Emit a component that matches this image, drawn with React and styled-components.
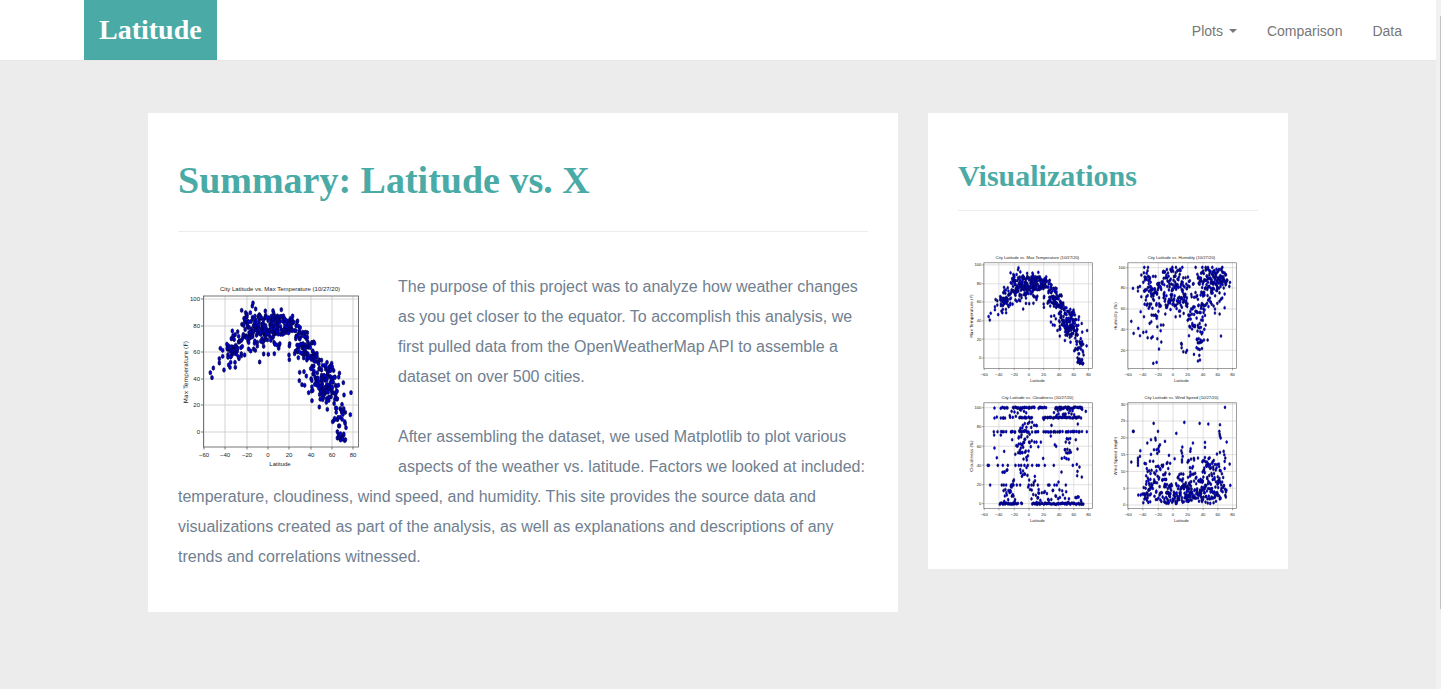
import React from 'react';
import styled, { createGlobalStyle } from 'styled-components';

const TEAL = '#4aaaa5';
const SERIF = '"Liberation Serif", "Times New Roman", serif';

const GlobalStyle = createGlobalStyle`
  *, *::before, *::after { box-sizing: border-box; }
  html { height: 100%; }
  body {
    margin: 0;
    min-height: 100%;
    background: #ececec;
    font-family: "Liberation Sans", Arial, sans-serif;
    font-size: 16px;
    color: #708090;
  }
`;

const Page = styled.div`
  display: flex;
  min-height: 100vh;
`;

const Content = styled.div`
  flex: 1;
  min-width: 0;
`;

const ScrollRail = styled.div`
  width: 5px;
  padding-top: 16px;
  background: #f1f1f1;
  display: flex;
  justify-content: flex-end;
`;

const ScrollThumb = styled.div`
  width: 1px;
  height: 86vh;
  max-height: 100%;
  background: #c1c1c1;
`;

const NavBar = styled.header`
  display: flex;
  justify-content: space-between;
  align-items: stretch;
  min-height: 61px;
  padding: 0 19px 0 84px;
  background: #fff;
  border-bottom: 1px solid #e7e7e7;
`;

const Brand = styled.a`
  display: flex;
  align-items: center;
  padding: 0 15px;
  background: ${TEAL};
  color: #fff;
  font: bold 28px/60px ${SERIF};
  text-decoration: none;
`;

const NavItems = styled.nav`
  display: flex;
  align-items: center;
`;

const NavLink = styled.a`
  padding: 21px 15px 19px;
  color: #777;
  font-size: 14px;
  line-height: 20px;
  text-decoration: none;
`;

const NavButton = styled.button`
  display: flex;
  align-items: center;
  gap: 6px;
  padding: 21px 15px 19px;
  border: 0;
  background: none;
  color: #777;
  font: 14px/20px "Liberation Sans", Arial, sans-serif;
  cursor: pointer;

  &::after {
    content: '';
    border-top: 4px solid #777;
    border-left: 4px solid transparent;
    border-right: 4px solid transparent;
  }
`;

const Columns = styled.main`
  display: grid;
  grid-template-columns: 25fr 12fr;
  align-items: start;
  gap: 30px;
  max-width: 1140px;
  margin: 52px auto 0;
`;

const Card = styled.section`
  padding: 46px 30px 40px;
  background: #fff;
`;

const Title = styled.h1`
  margin: 0;
  padding-bottom: 30px;
  border-bottom: 1px solid #ececec;
  color: ${TEAL};
  font: bold 38px/42px ${SERIF};
`;

const SideTitle = styled.h2`
  margin: 0;
  padding-bottom: 17px;
  border-bottom: 1px solid #ececec;
  color: ${TEAL};
  font: bold 30px/34px ${SERIF};
`;

const Article = styled.div`
  padding-top: 40px;
`;

const Paragraph = styled.p`
  margin: 0;
  line-height: 30px;

  & + & { margin-top: 30px; }
`;

const Figure = styled.div`
  float: left;
  width: 200px;
  margin-right: 20px;
`;

const Gallery = styled.div`
  display: flex;
  flex-wrap: wrap;
  justify-content: center;
  column-gap: 4px;
  padding: 35px 0 3px;
`;

const Thumb = styled.a`
  display: block;
  width: 140px;
`;

const Chart = styled.svg`
  display: block;
  width: 100%;
  height: auto;
`;

const ChartText = styled.text`
  fill: #222;
  font-family: "Liberation Sans", sans-serif;
  font-size: 6px;
  text-anchor: ${(p) => p.$anchor || 'middle'};
`;

const AxisTitle = styled.text`
  fill: #222;
  font-family: "DejaVu Sans", sans-serif;
  font-size: 6px;
  text-anchor: middle;
`;

/* Each plot holds single points [x, y] and clusters [x0, x1, y0, y1, count],
   both on the plot's own grid, which scale and shift turn into chart units. */
const temperature = {
  title: 'City Latitude vs. Max Temperature (10/27/20)',
  axis: 'Max Temperature (F)',
  ticks: [[100, 27], [80, 54], [60, 80], [40, 107], [20, 133], [0, 160]],
  scale: 3,
  shift: [0, 3],
  points: [
    [97, 293], [102, 308], [106, 279], [124, 251], [124, 264], [127, 220], [134, 226], [134, 244], [138, 285],
    [149, 216], [149, 223], [152, 270], [156, 277], [158, 262], [160, 243], [172, 277], [171, 262], [163, 168],
    [162, 190], [165, 182], [150, 239], [191, 106], [203, 113], [217, 113], [223, 93], [225, 84], [233, 102],
    [204, 126], [207, 118], [192, 148], [179, 170], [182, 184], [245, 261], [257, 237], [271, 238], [289, 236],
    [262, 108], [263, 121], [244, 119], [250, 128], [285, 107], [310, 104], [287, 114], [200, 240], [190, 236],
    [183, 251], [212, 222], [218, 228], [227, 222], [232, 226], [238, 213], [257, 214], [302, 220], [303, 212],
    [334, 213], [335, 206], [333, 240], [334, 254], [350, 236], [357, 225], [361, 248], [388, 173], [381, 184],
    [365, 292], [364, 317], [372, 329], [380, 331], [378, 290], [385, 303], [392, 353], [402, 377], [424, 396],
    [448, 403], [519, 353], [496, 323], [498, 360], [517, 419], [504, 458], [502, 412], [464, 440], [461, 265],
    [463, 276], [447, 262], [445, 382], [424, 255], [478, 470], [492, 388],
  ],
  clusters: [
    [158, 195, 175, 252, 24], [145, 175, 205, 250, 16], [195, 225, 125, 190, 30], [205, 240, 150, 205, 20],
    [225, 265, 122, 180, 32], [240, 300, 122, 182, 44], [245, 308, 165, 212, 26], [280, 345, 122, 172, 46],
    [310, 368, 135, 185, 24], [352, 390, 170, 240, 34], [375, 410, 200, 258, 30], [398, 432, 235, 348, 46],
    [430, 462, 270, 374, 44], [420, 478, 305, 388, 32], [460, 485, 285, 388, 14], [468, 502, 398, 455, 20],
    [478, 503, 475, 498, 13],
  ],
};

const humidity = {
  title: 'City Latitude vs. Humidity (10/27/20)',
  axis: 'Humidity (%)',
  ticks: [[100, 31], [80, 60], [60, 90], [40, 119], [20, 149]],
  scale: 2.1,
  shift: [-8.6, -1.4],
  points: [
    [82, 229], [89, 265], [103, 250], [108, 272], [118, 262], [127, 260], [131, 278], [142, 279], [146, 275],
    [148, 355], [158, 352], [165, 312], [172, 291], [160, 281], [160, 245], [171, 240], [178, 240], [137, 235],
    [142, 230], [158, 220], [170, 257], [110, 200], [120, 215], [87, 130], [102, 127], [108, 124], [102, 138],
    [112, 90], [112, 155], [232, 295], [233, 308], [233, 298], [238, 320], [246, 322], [249, 316], [255, 272],
    [270, 328], [286, 331], [288, 345], [282, 348], [300, 285], [311, 285], [351, 273], [362, 188], [347, 207],
    [333, 204], [333, 192], [378, 112], [376, 124], [362, 147], [340, 175], [275, 67], [205, 67], [216, 67],
    [235, 67], [121, 67], [132, 67], [295, 67], [305, 67], [312, 67], [325, 67], [355, 67], [301, 253],
    [305, 240], [215, 215], [228, 213], [239, 205], [184, 207],
  ],
  clusters: [
    [118, 140, 75, 115, 15], [120, 172, 112, 190, 36], [122, 168, 165, 215, 14], [140, 182, 92, 150, 20],
    [176, 236, 72, 122, 46], [178, 252, 118, 188, 58], [195, 248, 150, 200, 22], [235, 300, 95, 165, 26],
    [250, 305, 175, 218, 26], [250, 300, 215, 250, 12], [277, 296, 245, 315, 20], [255, 275, 235, 255, 6],
    [280, 368, 72, 115, 62], [295, 360, 98, 145, 38], [315, 372, 78, 128, 26], [290, 355, 128, 170, 18],
    [290, 330, 165, 194, 12],
  ],
};

const cloudiness = {
  title: 'City Latitude vs. Cloudiness (10/27/20)',
  axis: 'Cloudiness (%)',
  ticks: [[100, 31], [80, 58], [60, 86], [40, 113], [20, 141], [0, 168]],
  scale: 2.1,
  shift: [-9.3, 2.9],
  points: [
    [85, 232], [88, 232], [115, 232], [130, 232], [145, 232], [168, 232], [178, 232], [185, 232], [195, 232],
    [205, 232], [218, 232], [232, 232], [238, 232], [256, 232], [283, 232], [340, 232], [352, 229], [92, 291],
    [127, 291], [133, 291], [140, 291], [155, 291], [162, 291], [172, 291], [182, 291], [208, 291], [216, 291],
    [222, 291], [235, 291], [266, 291], [270, 291], [285, 291], [292, 291], [319, 291], [367, 267], [353, 263],
    [354, 250], [360, 237], [306, 252], [226, 265], [251, 211], [286, 170], [290, 175], [354, 183], [349, 155],
    [104, 141], [112, 209], [134, 190], [105, 180], [158, 155], [274, 144], [379, 70], [368, 64], [307, 211],
    [105, 60], [105, 90], [112, 87], [382, 131], [103, 131], [114, 131], [152, 88], [160, 88], [297, 282],
    [253, 94], [355, 108], [276, 112], [124, 141],
  ],
  clusters: [
    [124, 145, 57, 61, 6], [158, 227, 57, 61, 20], [235, 260, 57, 61, 7], [286, 370, 57, 61, 26],
    [124, 140, 87, 90, 4], [178, 218, 87, 90, 12], [250, 366, 87, 90, 34], [124, 140, 130, 132, 4],
    [152, 170, 130, 132, 5], [178, 208, 128, 133, 11], [215, 240, 130, 132, 4], [250, 310, 130, 132, 13],
    [315, 368, 130, 132, 11], [120, 176, 345, 349, 20], [183, 188, 345, 349, 2], [216, 372, 345, 349, 50],
    [165, 198, 162, 200, 10], [180, 235, 95, 125, 12], [175, 212, 135, 228, 24], [314, 334, 150, 215, 16],
    [130, 168, 292, 343, 16], [230, 330, 305, 343, 24], [150, 200, 62, 85, 9], [283, 345, 62, 86, 18],
    [210, 245, 150, 180, 6], [128, 145, 232, 253, 5], [180, 204, 238, 274, 9], [153, 165, 265, 300, 6],
    [205, 240, 275, 345, 12], [345, 370, 322, 345, 6],
  ],
};

const windSpeed = {
  title: 'City Latitude vs. Wind Speed (10/27/20)',
  axis: 'Wind Speed (mph)',
  ticks: [[30, 26], [25, 50], [20, 74], [15, 98], [10, 122], [5, 146], [0, 170]],
  scale: 2.1,
  shift: [-8.6, 2.9],
  points: [
    [363, 58], [149, 106], [162, 130], [87, 130], [89, 130], [217, 136], [241, 103], [287, 106], [313, 108],
    [348, 110], [346, 130], [347, 138], [348, 144], [350, 150], [368, 162], [377, 228], [379, 292], [82, 222],
    [109, 188], [108, 205], [102, 210], [102, 217], [102, 224], [102, 232], [122, 226], [130, 165], [141, 155],
    [154, 150], [155, 156], [183, 160], [195, 202], [212, 212], [235, 177], [232, 188], [234, 195], [236, 205],
    [234, 215], [234, 222], [260, 182], [259, 190], [267, 165], [303, 163], [303, 178], [282, 210], [141, 199],
    [168, 170], [165, 175], [163, 182], [158, 185], [150, 185], [165, 190], [160, 196], [348, 193], [339, 198],
    [359, 190], [361, 200], [364, 210], [362, 220], [103, 321], [110, 321], [115, 318], [120, 317],
  ],
  clusters: [
    [118, 142, 285, 349, 24], [125, 200, 260, 320, 40], [125, 200, 218, 260, 26], [150, 200, 320, 348, 14],
    [180, 262, 288, 347, 78], [215, 300, 255, 330, 52], [245, 342, 300, 347, 68], [288, 352, 228, 312, 56],
    [340, 368, 240, 335, 24], [295, 330, 208, 240, 15], [250, 272, 208, 255, 10],
  ],
};

const LATITUDES = [-60, -40, -20, 0, 20, 40, 60, 80];
const latitudeToX = (lat) => Math.round(lat * 1.064 + 90);

/* Fills every cluster from left to right, with repeatable random heights. */
function scatter({ points, clusters, scale, shift }) {
  let seed = 7;
  const random = () => {
    seed = (seed * 16807) % 2147483647;
    return seed / 2147483647;
  };
  const spread = clusters.flatMap(([x0, x1, y0, y1, count]) =>
    Array.from({ length: count }, (_, i) => [
      x0 + (x1 - x0) * ((i + random()) / count),
      y0 + (y1 - y0) * random(),
    ])
  );
  return [...points, ...spread].map(([x, y]) => [x / scale + shift[0], y / scale + shift[1]]);
}

function ScatterPlot({ plot }) {
  return (
    <Chart viewBox="0 0 200 200" role="img" aria-label={plot.title}>
      <g stroke="#c8c8c8" strokeWidth="0.8">
        {LATITUDES.map((lat) => (
          <line key={lat} x1={latitudeToX(lat)} x2={latitudeToX(lat)} y1="24" y2="175" />
        ))}
        {plot.ticks.map(([value, y]) => (
          <line key={value} x1="25" x2="180" y1={y} y2={y} />
        ))}
      </g>
      <g fill="#0000c8" stroke="#00003c" strokeWidth="0.7" strokeOpacity="0.85">
        {scatter(plot).map(([x, y], i) => (
          <ellipse key={i} cx={x} cy={y} rx="1.4" ry="2.2" />
        ))}
      </g>
      <rect x="25.5" y="24" width="155" height="151" fill="none" stroke="#666" strokeWidth="0.9" />
      <g stroke="#444" strokeWidth="0.7">
        {LATITUDES.map((lat) => (
          <line key={lat} x1={latitudeToX(lat)} x2={latitudeToX(lat)} y1="175" y2="177.5" />
        ))}
        {plot.ticks.map(([value, y]) => (
          <line key={value} x1="23" x2="25" y1={y} y2={y} />
        ))}
      </g>
      <ChartText x="102" y="19">{plot.title}</ChartText>
      {LATITUDES.map((lat) => (
        <ChartText key={lat} x={latitudeToX(lat)} y="185">
          {String(lat).replace('-', '−')}
        </ChartText>
      ))}
      {plot.ticks.map(([value, y]) => (
        <ChartText key={value} $anchor="end" x="22" y={y + 2}>{value}</ChartText>
      ))}
      <ChartText x="102" y="194">Latitude</ChartText>
      <AxisTitle transform="translate(10 100) rotate(-90)">{plot.axis}</AxisTitle>
    </Chart>
  );
}

export default function App() {
  return (
    <>
      <GlobalStyle />
      <Page>
        <Content>
          <NavBar>
            <Brand href="#home">Latitude</Brand>
            <NavItems>
              <NavButton type="button" aria-haspopup="true">Plots</NavButton>
              <NavLink href="#comparison">Comparison</NavLink>
              <NavLink href="#data">Data</NavLink>
            </NavItems>
          </NavBar>
          <Columns>
            <Card>
              <Title>Summary: Latitude vs. X</Title>
              <Article>
                <Figure>
                  <ScatterPlot plot={temperature} />
                </Figure>
                <Paragraph>
                  The purpose of this project was to analyze how weather changes as you get closer to the
                  equator. To accomplish this analysis, we first pulled data from the OpenWeatherMap API to
                  assemble a dataset on over 500 cities.
                </Paragraph>
                <Paragraph>
                  After assembling the dataset, we used Matplotlib to plot various aspects of the weather vs.
                  latitude. Factors we looked at included: temperature, cloudiness, wind speed, and humidity.
                  This site provides the source data and visualizations created as part of the analysis, as
                  well as explanations and descriptions of any trends and correlations witnessed.
                </Paragraph>
              </Article>
            </Card>
            <Card>
              <SideTitle>Visualizations</SideTitle>
              <Gallery>
                <Thumb href="#temperature"><ScatterPlot plot={temperature} /></Thumb>
                <Thumb href="#humidity"><ScatterPlot plot={humidity} /></Thumb>
                <Thumb href="#cloudiness"><ScatterPlot plot={cloudiness} /></Thumb>
                <Thumb href="#wind-speed"><ScatterPlot plot={windSpeed} /></Thumb>
              </Gallery>
            </Card>
          </Columns>
        </Content>
        <ScrollRail aria-hidden="true">
          <ScrollThumb />
        </ScrollRail>
      </Page>
    </>
  );
}
